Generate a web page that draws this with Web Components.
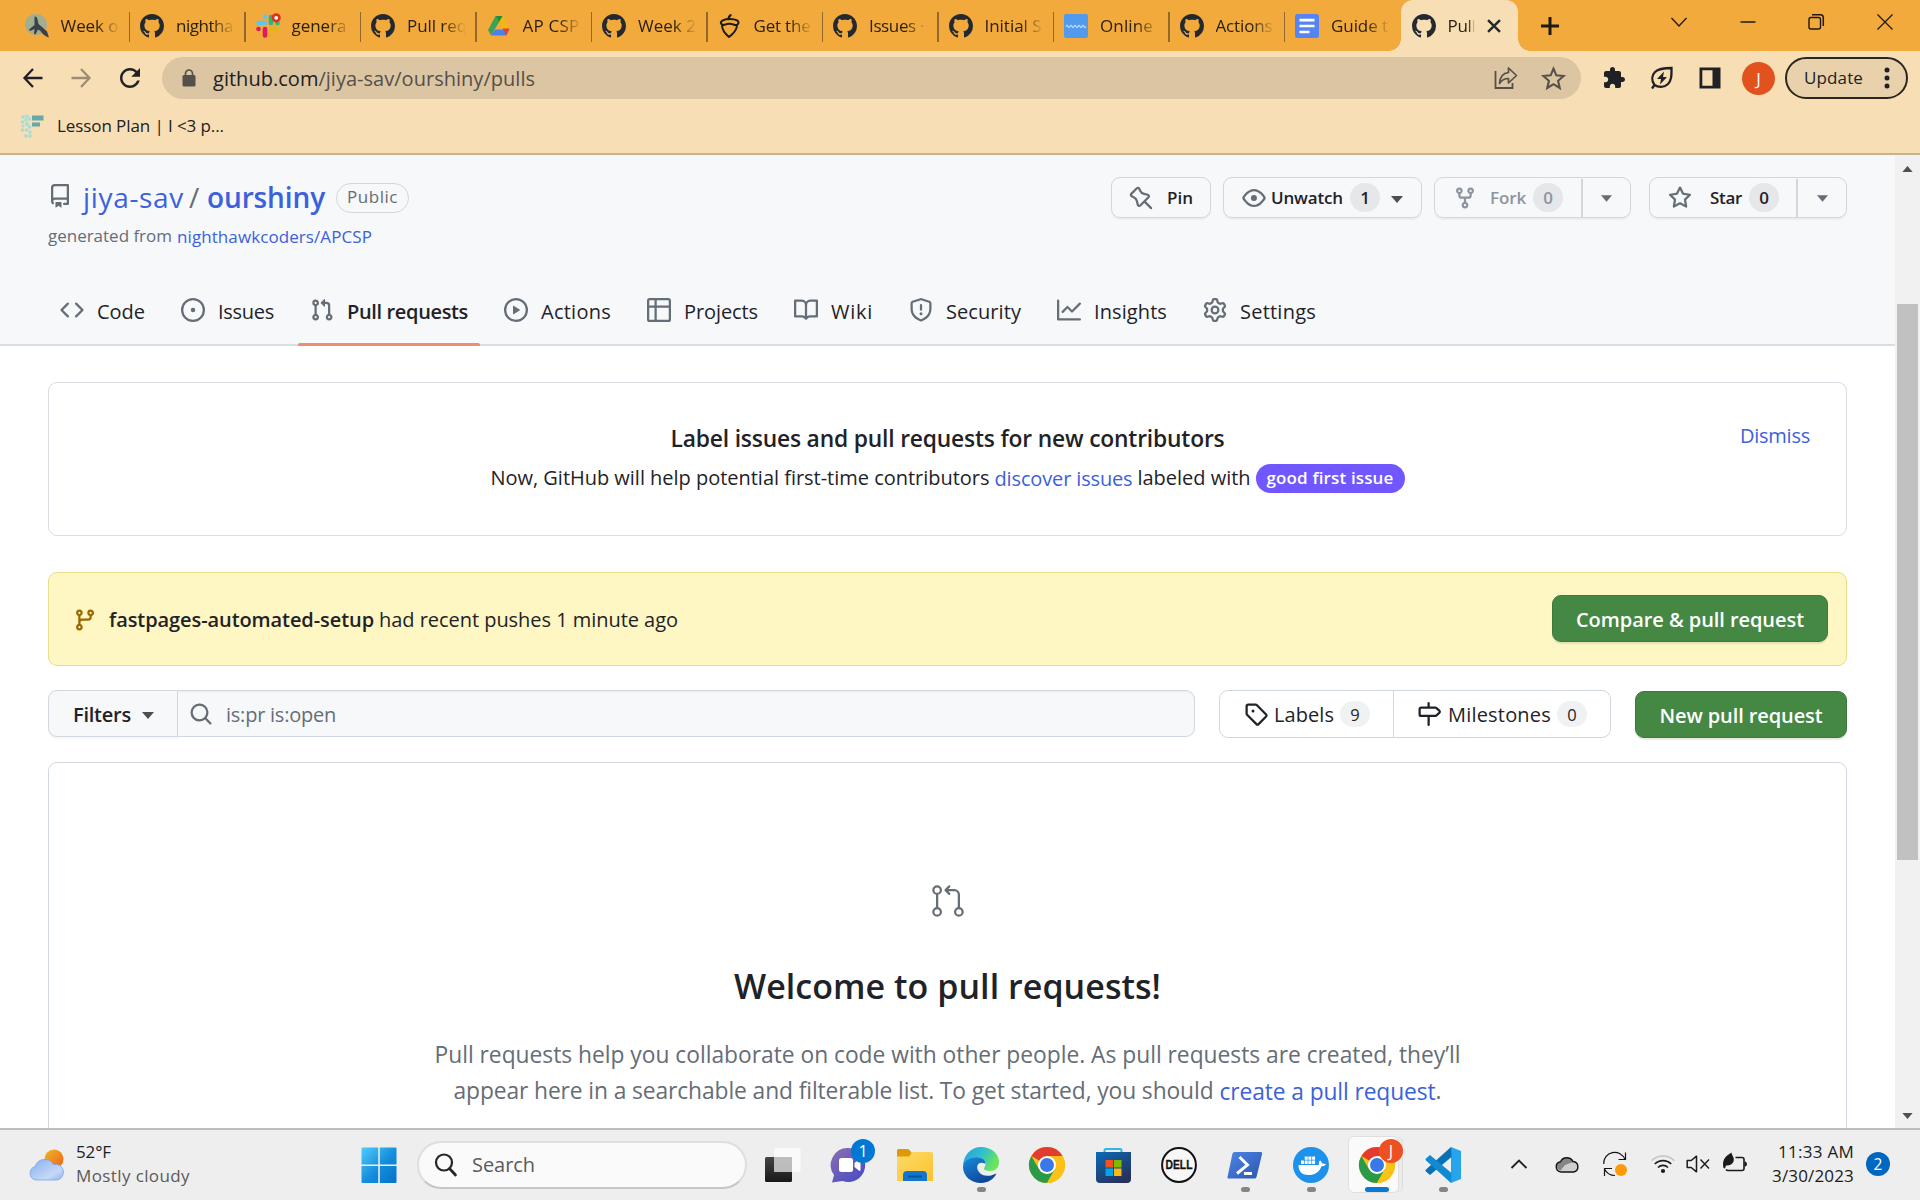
<!DOCTYPE html>
<html lang="en">
<head>
<meta charset="utf-8">
<title>Pull requests · jiya-sav/ourshiny</title>
<style>
html,body{margin:0;height:100%}
body{width:1920px;height:1200px;overflow:hidden;background:#fff;font-family:"Open Sans","Noto Sans",sans-serif;color:#1f2328}
</style>
</head>
<body>
<desktop-screen></desktop-screen>
<script>
const BASE = `<style>*{box-sizing:border-box}.row{display:flex;align-items:center}a{color:#3c61dc;text-decoration:none}</style>`;
function define(name, html, setup) {
  const t = document.createElement('template');
  t.innerHTML = BASE + html;
  customElements.define(name, class extends HTMLElement {
    connectedCallback() {
      if (this.shadowRoot) return;
      this.attachShadow({mode: 'open'}).appendChild(document.importNode(t.content, true));
      if (setup) setup.call(this, this.shadowRoot);
    }
  });
}
const o = d => ({b: '0 0 16 16', m: `<path fill="currentColor" fill-rule="evenodd" d="${d}"/>`});
const m24 = d => ({b: '0 0 24 24', m: `<path fill="currentColor" d="${d}"/>`});
const raw = (b, m) => ({b, m});
const CHROME = `<circle cx="18" cy="18" r="18" fill="#fbc116"/><path d="M18 18 2.4 9A18 18 0 0 1 33.6 9Z" fill="#e33b2e"/><path d="M2.4 9A18 18 0 0 0 18 36l7.8-13.5L10.2 22.5Z" fill="#2b9a48"/><path d="M18 9h15.6A18 18 0 0 1 18 36l7.8-13.5Z" fill="#fbc116"/><circle cx="18" cy="18" r="9" fill="#fff"/><circle cx="18" cy="18" r="7" fill="#3b78e7"/>`;
const ICONS = {
  repo: o('M2 2.5A2.5 2.5 0 0 1 4.5 0h8.75a.75.75 0 0 1 .75.75v12.5a.75.75 0 0 1-.75.75h-2.5a.75.75 0 0 1 0-1.5h1.75v-2h-8a1 1 0 0 0-.714 1.7.75.75 0 1 1-1.072 1.05A2.495 2.495 0 0 1 2 11.5Zm10.5-1h-8a1 1 0 0 0-1 1v6.708A2.486 2.486 0 0 1 4.5 9h8ZM5 12.25a.25.25 0 0 1 .25-.25h3.5a.25.25 0 0 1 .25.25v3.25a.25.25 0 0 1-.4.2l-1.45-1.087a.249.249 0 0 0-.3 0L5.4 15.7a.25.25 0 0 1-.4-.2Z'),
  code: o('m11.28 3.22 4.25 4.25a.75.75 0 0 1 0 1.06l-4.25 4.25a.749.749 0 0 1-1.275-.326.749.749 0 0 1 .215-.734L13.94 8l-3.72-3.72a.749.749 0 0 1 .326-1.275.749.749 0 0 1 .734.215Zm-6.56 0a.751.751 0 0 1 1.042.018.751.751 0 0 1 .018 1.042L2.06 8l3.72 3.72a.749.749 0 0 1-.326 1.275.749.749 0 0 1-.734-.215L.47 8.53a.75.75 0 0 1 0-1.06Z'),
  issue: o('M8 9.5a1.5 1.5 0 1 0 0-3 1.5 1.5 0 0 0 0 3ZM8 0a8 8 0 1 1 0 16A8 8 0 0 1 8 0ZM1.5 8a6.5 6.5 0 1 0 13 0 6.5 6.5 0 0 0-13 0Z'),
  pr: o('M1.5 3.25a2.25 2.25 0 1 1 3 2.122v5.256a2.251 2.251 0 1 1-1.5 0V5.372A2.25 2.25 0 0 1 1.5 3.25Zm5.677-.177L9.573.677A.25.25 0 0 1 10 .854V2.5h1A2.5 2.5 0 0 1 13.5 5v5.628a2.251 2.251 0 1 1-1.5 0V5a1 1 0 0 0-1-1h-1v1.646a.25.25 0 0 1-.427.177L7.177 3.427a.25.25 0 0 1 0-.354ZM3.75 2.5a.75.75 0 1 0 0 1.5.75.75 0 0 0 0-1.5Zm0 9.5a.75.75 0 1 0 0 1.5.75.75 0 0 0 0-1.5Zm8.25.75a.75.75 0 1 0 1.5 0 .75.75 0 0 0-1.5 0Z'),
  prbig: raw('0 0 24 24', '<path fill="currentColor" fill-rule="evenodd" d="M16 19.25a3.25 3.25 0 1 1 6.5 0 3.25 3.25 0 0 1-6.5 0Zm-14.5 0a3.25 3.25 0 1 1 6.5 0 3.25 3.25 0 0 1-6.5 0Zm0-14.5a3.25 3.25 0 1 1 6.5 0 3.25 3.25 0 0 1-6.5 0ZM4.75 3a1.75 1.75 0 1 0 .001 3.501A1.75 1.75 0 0 0 4.75 3Zm0 14.5a1.75 1.75 0 1 0 .001 3.501A1.75 1.75 0 0 0 4.75 17.5Zm14.5 0a1.75 1.75 0 1 0 .001 3.501 1.75 1.75 0 0 0-.001-3.501Z"/><path fill="currentColor" d="M13.405 1.72a.75.75 0 0 1 0 1.06L12.185 4h4.065A3.75 3.75 0 0 1 20 7.75v8.75a.75.75 0 0 1-1.5 0V7.75a2.25 2.25 0 0 0-2.25-2.25h-4.064l1.22 1.22a.75.75 0 0 1-1.061 1.06l-2.5-2.5a.75.75 0 0 1 0-1.06l2.5-2.5a.75.75 0 0 1 1.06 0ZM4.75 7.25A.75.75 0 0 1 5.5 8v8A.75.75 0 0 1 4 16V8a.75.75 0 0 1 .75-.75Z"/>'),
  play: o('M8 0a8 8 0 1 1 0 16A8 8 0 0 1 8 0ZM1.5 8a6.5 6.5 0 1 0 13 0 6.5 6.5 0 0 0-13 0Zm4.879-2.773 4.264 2.559a.25.25 0 0 1 0 .428l-4.264 2.559A.25.25 0 0 1 6 10.559V5.442a.25.25 0 0 1 .379-.215Z'),
  table: o('M0 1.75C0 .784.784 0 1.75 0h12.5C15.216 0 16 .784 16 1.75v12.5A1.75 1.75 0 0 1 14.25 16H1.75A1.75 1.75 0 0 1 0 14.25ZM6.5 6.5v8h7.75a.25.25 0 0 0 .25-.25V6.5Zm8-1.5V1.75a.25.25 0 0 0-.25-.25H6.5V5Zm-13 1.5v7.75c0 .138.112.25.25.25H5v-8ZM5 5V1.5H1.75a.25.25 0 0 0-.25.25V5Z'),
  book: o('M0 1.75A.75.75 0 0 1 .75 1h4.253c1.227 0 2.317.59 3 1.501A3.743 3.743 0 0 1 11.006 1h4.245a.75.75 0 0 1 .75.75v10.5a.75.75 0 0 1-.75.75h-4.507a2.25 2.25 0 0 0-1.591.659l-.622.621a.75.75 0 0 1-1.06 0l-.622-.621A2.25 2.25 0 0 0 5.258 13H.75a.75.75 0 0 1-.75-.75Zm7.251 10.324.004-5.073-.002-2.253A2.25 2.25 0 0 0 5.003 2.5H1.5v9h3.757a3.75 3.75 0 0 1 1.994.574ZM8.755 4.75l-.004 7.322a3.752 3.752 0 0 1 1.992-.572H14.5v-9h-3.495a2.25 2.25 0 0 0-2.25 2.25Z'),
  shield: o('M7.467.133a1.748 1.748 0 0 1 1.066 0l5.25 1.68A1.75 1.75 0 0 1 15 3.48V7c0 1.566-.32 3.182-1.303 4.682-.983 1.498-2.585 2.813-5.032 3.855a1.697 1.697 0 0 1-1.33 0c-2.447-1.042-4.049-2.357-5.032-3.855C1.32 10.182 1 8.566 1 7V3.48a1.755 1.755 0 0 1 1.217-1.667Zm.61 1.429a.25.25 0 0 0-.153 0l-5.25 1.68a.25.25 0 0 0-.174.238V7c0 1.358.275 2.666 1.057 3.86.784 1.194 2.121 2.34 4.366 3.297a.196.196 0 0 0 .154 0c2.245-.956 3.582-2.104 4.366-3.298C13.225 9.666 13.5 8.36 13.5 7V3.48a.251.251 0 0 0-.174-.237l-5.25-1.68ZM8.75 4.75v3a.75.75 0 0 1-1.5 0v-3a.75.75 0 0 1 1.5 0ZM9 10.5a1 1 0 1 1-2 0 1 1 0 0 1 2 0Z'),
  graph: o('M1.5 1.75V13.5h13.75a.75.75 0 0 1 0 1.5H.75a.75.75 0 0 1-.75-.75V1.75a.75.75 0 0 1 1.5 0Zm14.28 2.53-5.25 5.25a.75.75 0 0 1-1.06 0L7 7.06 4.28 9.78a.751.751 0 0 1-1.042-.018.751.751 0 0 1-.018-1.042l3.25-3.25a.75.75 0 0 1 1.06 0L10 7.94l4.72-4.72a.751.751 0 0 1 1.042.018.751.751 0 0 1 .018 1.042Z'),
  gear: o('M8 0a8.2 8.2 0 0 1 .701.031C9.444.095 9.99.645 10.16 1.29l.288 1.107c.018.066.079.158.212.224.231.114.454.243.668.386.123.082.233.09.299.071l1.103-.303c.644-.176 1.392.021 1.82.63.27.385.506.792.704 1.218.315.675.111 1.422-.364 1.891l-.814.806c-.049.048-.098.147-.088.294.016.257.016.515 0 .772-.01.147.038.246.088.294l.814.806c.475.469.679 1.216.364 1.891a7.977 7.977 0 0 1-.704 1.217c-.428.61-1.176.807-1.82.63l-1.102-.302c-.067-.019-.177-.011-.3.071a5.909 5.909 0 0 1-.668.386c-.133.066-.194.158-.211.224l-.29 1.106c-.168.646-.715 1.196-1.458 1.26a8.006 8.006 0 0 1-1.402 0c-.743-.064-1.289-.614-1.458-1.26l-.289-1.106c-.018-.066-.079-.158-.212-.224a5.738 5.738 0 0 1-.668-.386c-.123-.082-.233-.09-.299-.071l-1.103.303c-.644.176-1.392-.021-1.82-.63a8.12 8.12 0 0 1-.704-1.218c-.315-.675-.111-1.422.363-1.891l.815-.806c.05-.048.098-.147.088-.294a6.214 6.214 0 0 1 0-.772c.01-.147-.038-.246-.088-.294l-.815-.806C.635 6.045.431 5.298.746 4.623a7.92 7.92 0 0 1 .704-1.217c.428-.61 1.176-.807 1.82-.63l1.102.302c.067.019.177.011.3-.071.214-.143.437-.272.668-.386.133-.066.194-.158.211-.224l.29-1.106C6.009.645 6.556.095 7.299.03 7.53.01 7.764 0 8 0Zm-.571 1.525c-.036.003-.108.036-.137.146l-.289 1.105c-.147.561-.549.967-.998 1.189-.173.086-.34.183-.5.29-.417.278-.97.423-1.529.27l-1.103-.303c-.109-.03-.175.016-.195.045-.22.312-.412.644-.573.99-.014.031-.021.11.059.19l.815.806c.411.406.562.957.53 1.456a4.709 4.709 0 0 0 0 .582c.032.499-.119 1.05-.53 1.456l-.815.806c-.081.08-.073.159-.059.19.162.346.353.677.573.989.02.03.085.076.195.046l1.102-.303c.56-.153 1.113-.008 1.53.27.161.107.328.204.501.29.447.222.85.629.997 1.189l.289 1.105c.029.109.101.143.137.146a6.6 6.6 0 0 0 1.142 0c.036-.003.108-.036.137-.146l.289-1.105c.147-.561.549-.967.998-1.189.173-.086.34-.183.5-.29.417-.278.97-.423 1.529-.27l1.103.303c.109.029.175-.016.195-.045.22-.313.411-.644.573-.99.014-.031.021-.11-.059-.19l-.815-.806c-.411-.406-.562-.957-.53-1.456a4.709 4.709 0 0 0 0-.582c-.032-.499.119-1.05.53-1.456l.815-.806c.081-.08.073-.159.059-.19a6.464 6.464 0 0 0-.573-.989c-.02-.03-.085-.076-.195-.046l-1.102.303c-.56.153-1.113.008-1.53-.27a4.44 4.44 0 0 0-.501-.29c-.447-.222-.85-.629-.997-1.189l-.289-1.105c-.029-.11-.101-.143-.137-.146a6.6 6.6 0 0 0-1.142 0ZM11 8a3 3 0 1 1-6 0 3 3 0 0 1 6 0ZM9.5 8a1.5 1.5 0 1 0-3.001.001A1.5 1.5 0 0 0 9.5 8Z'),
  eye: o('M8 2c1.981 0 3.671.992 4.933 2.078 1.27 1.091 2.187 2.345 2.637 3.023a1.62 1.62 0 0 1 0 1.798c-.45.678-1.367 1.932-2.637 3.023C11.67 13.008 9.981 14 8 14c-1.981 0-3.671-.992-4.933-2.078C1.797 10.83.88 9.576.43 8.898a1.62 1.62 0 0 1 0-1.798c.45-.677 1.367-1.931 2.637-3.022C4.33 2.992 6.019 2 8 2ZM1.679 7.932a.12.12 0 0 0 0 .136c.411.622 1.241 1.75 2.366 2.717C5.176 11.758 6.527 12.5 8 12.5c1.473 0 2.825-.742 3.955-1.715 1.124-.967 1.954-2.096 2.366-2.717a.12.12 0 0 0 0-.136c-.412-.621-1.242-1.75-2.366-2.717C10.824 4.242 9.473 3.5 8 3.5c-1.473 0-2.825.742-3.955 1.715-1.124.967-1.954 2.096-2.366 2.717ZM8 10a2 2 0 1 1-.001-3.999A2 2 0 0 1 8 10Z'),
  fork: o('M5 5.372v.878c0 .414.336.75.75.75h4.5a.75.75 0 0 0 .75-.75v-.878a2.25 2.25 0 1 1 1.5 0v.878a2.25 2.25 0 0 1-2.25 2.25h-1.5v2.128a2.251 2.251 0 1 1-1.5 0V8.5h-1.5A2.25 2.25 0 0 1 3.5 6.25v-.878a2.25 2.25 0 1 1 1.5 0ZM5 3.25a.75.75 0 1 0-1.5 0 .75.75 0 0 0 1.5 0Zm6.75.75a.75.75 0 1 0 0-1.5.75.75 0 0 0 0 1.5Zm-3 8.75a.75.75 0 1 0-1.5 0 .75.75 0 0 0 1.5 0Z'),
  star: o('M8 .25a.75.75 0 0 1 .673.418l1.882 3.815 4.21.612a.75.75 0 0 1 .416 1.279l-3.046 2.97.719 4.192a.751.751 0 0 1-1.088.791L8 12.347l-3.766 1.98a.75.75 0 0 1-1.088-.79l.72-4.194L.818 6.374a.75.75 0 0 1 .416-1.28l4.21-.611L7.327.668A.75.75 0 0 1 8 .25Zm0 2.445L6.615 5.5a.75.75 0 0 1-.564.41l-3.097.45 2.24 2.184a.75.75 0 0 1 .216.664l-.528 3.084 2.769-1.456a.75.75 0 0 1 .698 0l2.77 1.456-.53-3.084a.75.75 0 0 1 .216-.664l2.24-2.183-3.096-.45a.75.75 0 0 1-.564-.41L8 2.694Z'),
  branch: o('M9.5 3.25a2.25 2.25 0 1 1 3 2.122V6A2.5 2.5 0 0 1 10 8.5H6a1 1 0 0 0-1 1v1.128a2.251 2.251 0 1 1-1.5 0V5.372a2.25 2.25 0 1 1 1.5 0v1.836A2.493 2.493 0 0 1 6 7h4a1 1 0 0 0 1-1v-.628A2.25 2.25 0 0 1 9.5 3.25Zm-6 0a.75.75 0 1 0 1.5 0 .75.75 0 0 0-1.5 0Zm8.25-.75a.75.75 0 1 0 0 1.5.75.75 0 0 0 0-1.5ZM4.25 12a.75.75 0 1 0 0 1.5.75.75 0 0 0 0-1.5Z'),
  search: o('M10.68 11.74a6 6 0 0 1-7.922-8.982 6 6 0 0 1 8.982 7.922l3.04 3.04a.749.749 0 0 1-.326 1.275.749.749 0 0 1-.734-.215ZM11.5 7a4.499 4.499 0 1 0-8.997 0A4.499 4.499 0 0 0 11.5 7Z'),
  tag: o('M1 7.775V2.75C1 1.784 1.784 1 2.75 1h5.025c.464 0 .91.184 1.238.513l6.25 6.25a1.75 1.75 0 0 1 0 2.474l-5.026 5.026a1.75 1.75 0 0 1-2.474 0l-6.25-6.25A1.752 1.752 0 0 1 1 7.775Zm1.5 0c0 .066.026.13.073.177l6.25 6.25a.25.25 0 0 0 .354 0l5.025-5.025a.25.25 0 0 0 0-.354l-6.25-6.25a.25.25 0 0 0-.177-.073H2.75a.25.25 0 0 0-.25.25ZM6 5a1 1 0 1 1 0 2 1 1 0 0 1 0-2Z'),
  milestone: o('M7.75 0a.75.75 0 0 1 .75.75V3h3.634c.414 0 .814.147 1.13.414l2.07 1.75a1.75 1.75 0 0 1 0 2.672l-2.07 1.75a1.75 1.75 0 0 1-1.13.414H8.5v5.25a.75.75 0 0 1-1.5 0V10H2.75A1.75 1.75 0 0 1 1 8.25v-3.5C1 3.784 1.784 3 2.75 3H7V.75A.75.75 0 0 1 7.75 0Zm4.384 8.5a.25.25 0 0 0 .161-.06l2.07-1.75a.248.248 0 0 0 0-.38l-2.07-1.75a.25.25 0 0 0-.161-.06H2.75a.25.25 0 0 0-.25.25v3.5c0 .138.112.25.25.25h9.384Z'),
  pin: raw('0 0 16 16', '<path transform="matrix(-1 0 0 1 16 0)" fill="none" stroke="currentColor" stroke-width="1.5" stroke-linejoin="round" stroke-linecap="round" d="M10.76 1.52 14.48 5.24A1 1 0 0 1 14.2 6.85L12.87 7.46A3.84 3.84 0 0 0 10.75 10.05L10.16 12.51A1 1 0 0 1 8.48 12.98L3.02 7.52A1 1 0 0 1 3.49 5.84L5.95 5.25A3.84 3.84 0 0 0 8.54 3.13L9.15 1.8A1 1 0 0 1 10.76 1.52ZM5.75 10.25 1.25 14.75"/>'),
  github: o('M8 0c4.42 0 8 3.58 8 8a8.013 8.013 0 0 1-5.45 7.59c-.4.08-.55-.17-.55-.38 0-.27.01-1.13.01-2.2 0-.75-.25-1.23-.54-1.48 1.78-.2 3.65-.88 3.65-3.95 0-.88-.31-1.59-.82-2.15.08-.2.36-1.02-.08-2.12 0 0-.67-.22-2.2.82-.64-.18-1.32-.27-2-.27-.68 0-1.36.09-2 .27-1.53-1.03-2.2-.82-2.2-.82-.44 1.1-.16 1.92-.08 2.12-.51.56-.82 1.28-.82 2.15 0 3.06 1.86 3.75 3.64 3.95-.23.2-.44.55-.51 1.07-.46.21-1.61.55-2.33-.66-.15-.24-.6-.83-1.23-.82-.67.01-.27.38.01.53.34.19.73.9.82 1.13.16.45.68 1.31 2.69.94 0 .67.01 1.3.01 1.49 0 .21-.15.45-.55.38A7.995 7.995 0 0 1 0 8c0-4.42 3.58-8 8-8Z'),
  hawk: raw('0 0 24 24', '<ellipse cx="11" cy="10.5" rx="11" ry="10.5" fill="#a3ae90"/><path d="M9.5 2.5c2 0 2.8 1.3 3 3l1 4.5 3 2.5 5.5 5 2 6c-4-1-6.5-3.5-8.5-6.5l-2.5-1.5-2.5 5-1.5-.5.5-5-4.5 2-1-1.5 5.5-4.5Z" fill="#3b414b"/>'),
  slack: raw('0 0 24 24', '<g stroke-width="4.6" stroke-linecap="round" fill="none"><path d="M2.5 9h6.500M9 2.6v.01" stroke="#5cc6f0"/><path d="M15 3v6M21.500 9v.01" stroke="#2eb67d"/><path d="M21 15h-6M15 21.500v.01" stroke="#e3b41e"/><path d="M9 21.500V15M2.500 15v.01" stroke="#dd1c5a"/></g><circle cx="20.200" cy="3.800" r="4.600" fill="#e0311d"/><circle cx="20.200" cy="3.800" r="1.900" fill="#fff"/>'),
  drive: raw('0 0 24 24', '<path d="M8.500 2h7l7 12.500h-7Z" fill="#f1b90d"/><path d="m8.500 2 3.500 6.200L4 21.500 1 16Z" fill="#3da352"/><path d="M8.500 2h7L12 8.200Z" fill="#248a3c"/><path d="M8 15.500h14L19 21.500H4Z" fill="#4c80ee"/><path d="M15.500 14.500h7l-3 7Z" fill="#dc4436"/>'),
  acorn: raw('0 0 24 24', '<g fill="none" stroke="#1d1c14" stroke-linecap="round" stroke-linejoin="round"><path stroke-width="2" d="M3 9.500C2 7 6 5 12 5s10 2 8 5-4-1-11 0C6 11 4.500 12 3 9.500ZM4 11c0 6 4 9.500 7 12 4-3 8-7 8-12"/><path stroke-width="2.500" d="M10.500 5c0-2 .7-3 2-3.800"/></g>'),
  scroll: raw('0 0 24 24', '<rect width="24" height="24" rx="2" fill="#519aee"/><path d="M2 12.500q1-2 2 0t2 0 2 0 2 0 2 0 2 0 2 0 2 0 2 0 2 0" stroke="#b8d8fb" stroke-width="1.300" fill="none"/>'),
  docs: raw('0 0 24 24', '<rect width="24" height="24" rx="2.500" fill="#5684f4"/><path d="M4.500 6.200h15M4.500 12h15M4.500 18h10" stroke="#fff" stroke-width="2.700"/>'),
  x: raw('0 0 24 24', '<path d="m5.500 5.500 13 13M18.500 5.500l-13 13" stroke="currentColor" stroke-width="2.700"/>'),
  plus: raw('0 0 24 24', '<path d="M12 3v18M3 12h18" stroke="currentColor" stroke-width="3"/>'),
  down: raw('0 0 24 24', '<path d="m4.500 8 7.500 8 7.500-8" fill="none" stroke="currentColor" stroke-width="1.300"/>'),
  min: raw('0 0 24 24', '<path d="M4.500 12h15" stroke="currentColor" stroke-width="1.500"/>'),
  restore: raw('0 0 24 24', '<rect x="5" y="7.500" width="11.500" height="11.500" rx="2" fill="none" stroke="currentColor" stroke-width="1.400"/><path d="M8 4.700h8.500a2.800 2.800 0 0 1 2.800 2.800V16" fill="none" stroke="currentColor" stroke-width="1.500"/>'),
  close: raw('0 0 24 24', '<path d="m4.500 4.500 15 15M19.500 4.500l-15 15" stroke="currentColor" stroke-width="1.300"/>'),
  back: raw('0 0 24 24', '<path d="M21.500 12H4M12 3 3.500 12l8.500 9" fill="none" stroke="currentColor" stroke-width="2.300"/>'),
  fwd: raw('0 0 24 24', '<path d="M2.500 12H20M12 3l8.500 9-8.500 9" fill="none" stroke="currentColor" stroke-width="2.300"/>'),
  reload: m24('M17.65 6.35C16.2 4.9 14.21 4 12 4c-4.42 0-7.99 3.58-7.99 8s3.57 8 7.99 8c3.73 0 6.84-2.55 7.73-6h-2.08c-.82 2.33-3.04 4-5.65 4-3.31 0-6-2.69-6-6s2.69-6 6-6c1.66 0 3.14.69 4.22 1.78L13 11h7V4l-2.35 2.35z'),
  lock: raw('0 0 14 18', '<rect x=".5" y="6" width="13" height="11.500" rx="1.500" fill="currentColor"/><path d="M3.500 7V4.500a3.500 3.500 0 0 1 7 0V7" fill="none" stroke="currentColor" stroke-width="1.700"/>'),
  share: raw('0 0 24 24', '<path d="M1.500 5v17h17v-5" fill="none" stroke="currentColor" stroke-width="1.800"/><path d="M14.500 2v4.500C9 7 6 11 5.500 17.500c2.500-4 5-5 9-5V17l8-7.500Z" fill="none" stroke="currentColor" stroke-width="1.700" stroke-linejoin="round"/>'),
  bstar: raw('0 0 24 24', '<path d="m12 2.500 2.700 6.500 7.000.6-5.300 4.600 1.600 6.900L12 17.400 6 21.100l1.600-6.900L2.300 9.600 9.300 9Z" fill="none" stroke="currentColor" stroke-width="2"/>'),
  puzzle: m24('M20.5 11H19V7c0-1.100-.9-2-2-2h-4V3.500C13 2.120 11.880 1 10.500 1S8 2.120 8 3.500V5H4c-1.100 0-1.990.9-1.990 2v3.800H3.500c1.490 0 2.700 1.210 2.700 2.700s-1.210 2.700-2.700 2.700H2V20c0 1.100.9 2 2 2h3.800v-1.500c0-1.490 1.210-2.700 2.700-2.700 1.490 0 2.700 1.210 2.700 2.700V22H17c1.100 0 2-.9 2-2v-4h1.500c1.380 0 2.500-1.120 2.500-2.500S21.880 11 20.500 11z'),
  leaf: raw('0 0 24 24', '<path d="M2 22.500 4.500 19M4.500 19C1 14 2 9 5 6c3.500-3.500 9-4 16.500-4 0 7 .3 12-3.500 16-4 4-10 3.500-13.500 1Z" fill="none" stroke="currentColor" stroke-width="2.300"/><path d="m14 5.500-7 7.500h4l-1 5.500 7-7.500h-4Z" fill="currentColor"/>'),
  panel: raw('0 0 24 24', '<path d="M1.500 1.500h21v21h-21ZM4.300 4.300v15.400h10.200V4.300Z" fill-rule="evenodd" fill="currentColor"/>'),
  dots: raw('0 0 24 24', '<g fill="currentColor"><circle cx="12" cy="4" r="2.500"/><circle cx="12" cy="12" r="2.500"/><circle cx="12" cy="20" r="2.500"/></g>'),
  lesson: raw('0 0 24 24', '<path d="M12 1.500h11.500v5H12ZM12 8.500h8v4h-8Z" fill="#66a9a8"/><g fill="#a5dcd8"><circle cx="3" cy="3" r="1.800"/><circle cx="7" cy="2.200" r="1.800"/><circle cx="9.500" cy="5" r="1.800"/><circle cx="6" cy="6" r="1.800"/><circle cx="2.500" cy="8" r="1.800"/><circle cx="7" cy="10" r="2"/><circle cx="3" cy="12" r="1.600"/><circle cx="9.500" cy="13" r="1.800"/><circle cx="2.500" cy="16" r="1.800"/><circle cx="6.500" cy="16" r="1.800"/><circle cx="10" cy="18" r="1.800"/><circle cx="6" cy="22" r="1.800"/><circle cx="10" cy="22" r="1.800"/></g>'),
  caret: raw('0 0 12 7', '<path d="M0 0h12L6 7Z" fill="currentColor"/>'),
  weather: raw('0 0 36 32', '<defs><linearGradient id="s" x2="1" y2="1"><stop stop-color="#f0b72f"/><stop offset="1" stop-color="#ee6110"/></linearGradient><linearGradient id="c" x2="1" y2="1"><stop stop-color="#87aef0"/><stop offset=".7" stop-color="#c5d9f6"/><stop offset="1" stop-color="#92b3ee"/></linearGradient></defs><circle cx="25.500" cy="10" r="9.500" fill="url(#s)"/><path d="M7 31a7 7 0 0 1-.5-13.500A10.200 10.200 0 0 1 25 15.500a8 8 0 0 1 4 15.500Z" fill="url(#c)" stroke="#7fa3e8" stroke-width=".8"/>'),
  windows: raw('0 0 36 36', '<defs><linearGradient id="w" x2="1" y2="1"><stop stop-color="#4ecdfb"/><stop offset=".55" stop-color="#138cdb"/><stop offset="1" stop-color="#0572c8"/></linearGradient></defs><path d="M.5 1.500Q.5.500 1.500.500H17.200v17H.5ZM18.800.500H34.500q1 0 1 1v16H18.800ZM.5 19h16.700v17H1.500q-1 0-1-1ZM18.800 19h16.700v16q0 1-1 1H18.800Z" fill="url(#w)"/>'),
  wsearch: raw('0 0 24 24', '<circle cx="10" cy="9.500" r="8" fill="none" stroke="#24242a" stroke-width="2.200"/><path d="m15.500 15.500 6 6.500" stroke="#24242a" stroke-width="2.700" stroke-linecap="round"/>'),
  taskview: raw('0 0 36 36', '<defs><linearGradient id="d" x2="0" y2="1"><stop stop-color="#454545"/><stop offset="1" stop-color="#181818"/></linearGradient></defs><rect y="10" width="27" height="25" rx="1.500" fill="url(#d)"/><rect x="9" y="1" width="26.500" height="24" rx="1.500" fill="#fff" fill-opacity=".72"/><path d="M9 10h18v15H9Z" fill="#b8b8b8" fill-opacity=".7"/>'),
  chat: raw('0 0 36 36', '<defs><linearGradient id="p" x2=".8" y2="1"><stop stop-color="#8d6fb0"/><stop offset="1" stop-color="#4a4cc4"/></linearGradient></defs><path d="M17.500 1a17 17 0 1 1-6 33L1 35.500 3 28A17 17 0 0 1 17.500 1Z" fill="url(#p)"/><rect x="8" y="11" width="14" height="14" rx="2.500" fill="#fff"/><path d="m23.500 16 5-4q1 0 1 1v10q0 1-1 1l-5-4Z" fill="#fff"/>'),
  explorer: raw('0 0 36 36', '<defs><linearGradient id="f" x2="1" y2="1"><stop stop-color="#fddb6b"/><stop offset="1" stop-color="#fcc22c"/></linearGradient></defs><path d="M0 3.500Q0 2 1.500 2h9q1.500 0 2.500 1.500L15.500 7 12 11H0Z" fill="#dd9a08"/><path d="M0 9.500h12L15.500 5H34q2 0 2 2v27H0Z" fill="url(#f)"/><path d="M6 34v-6q0-4 4-4h16q4 0 4 4v6Z" fill="#1276cf"/><path d="M11 29.500h14" stroke="#0b5296" stroke-width="2"/>'),
  edge: raw('0 0 36 36', '<defs><linearGradient id="e" x2="1" y2=".4"><stop stop-color="#2a9fe0"/><stop offset=".55" stop-color="#2fbfce"/><stop offset="1" stop-color="#6be558"/></linearGradient><linearGradient id="g" x2=".6" y2="1"><stop stop-color="#1a8adb"/><stop offset="1" stop-color="#0c4597"/></linearGradient></defs><path d="M18 0c10 0 18 6.500 18 15 0 6-4 9-9 9-4 0-6-1.200-6-2.500 0-1 1.500-1.500 1.500-4.500 0-3-3.500-6-8.500-6C6 11 1 15 0 20 0 8 8 0 18 0Z" fill="url(#e)"/><path d="M0 20C.5 14 6 10.500 13 10.500c5 0 9.500 2 9.500 6-8-3-9.500 3-7.500 7 2.500 5 9 6 13 5 3-.8 4.500-2 5.500-2C31 32 25 36 18 36 8 36 0 29 0 20Z" fill="url(#g)"/>'),
  chrome: raw('0 0 36 36', CHROME),
  store: raw('0 0 36 36', '<defs><linearGradient id="h" x2=".6" y2="1"><stop stop-color="#0b6bb6"/><stop offset="1" stop-color="#26325c"/></linearGradient></defs><path d="M9.500 7V3.500q0-1.500 1.500-1.500h14q1.500 0 1.500 1.500V7" fill="none" stroke="#30b5e4" stroke-width="2"/><path d="M1 5h35v27q0 4-4 4H5q-4 0-4-4Z" fill="url(#h)"/><path fill="#f1511b" d="M10.500 13h7.500v7.500h-7.500Z"/><path fill="#80b900" d="M19 13h7.500v7.500H19Z"/><path fill="#00a4ef" d="M10.500 21.500h7.500V29h-7.500Z"/><path fill="#fbb910" d="M19 21.500h7.500V29H19Z"/>'),
  dell: raw('0 0 36 36', '<circle cx="18" cy="18" r="16.900" fill="#f7f7f7" stroke="#111" stroke-width="2"/><text x="18" y="22.300" text-anchor="middle" textLength="27" lengthAdjust="spacingAndGlyphs" font-family="Liberation Sans, sans-serif" font-weight="bold" font-size="12.500" fill="#111" stroke="#111" stroke-width=".3">DELL</text>'),
  powershell: raw('0 0 36 36', '<defs><linearGradient id="q" x2="1" y2="1"><stop stop-color="#4d86e8"/><stop offset="1" stop-color="#2c56ad"/></linearGradient></defs><path d="M7.500 5H34q1.500 0 1.200 1.500L29.500 30q-.5 1.500-2 1.500H1.500Q0 31.500.5 30L5.500 6.500Q6 5 7.500 5Z" fill="url(#q)"/><path d="m12.500 10 8 8L10 26.500M17 26.500h8" fill="none" stroke="#fff" stroke-width="2.900"/>'),
  docker: raw('0 0 36 36', '<circle cx="18" cy="18" r="18" fill="#1d91ec"/><path d="M5.500 18h20.500c-.5-2 0-3.500 1-4.500 1.300.7 2 2 2 3 1.500-.3 3 0 4 .7-1 1.500-2.500 2-4.500 2C26.500 25 22 28 15.500 28 9.500 28 5.500 25 5.500 18Z" fill="#fff"/><path d="M8 13.500h3V17H8Zm3.700 0h3V17h-3Zm3.700 0h3V17h-3Zm3.700 0h3V17h-3Zm-7.400-3.900h3v3.200h-3Zm3.700 0h3v3.200h-3Zm3.700 0h3v3.200h-3Z" fill="#fff"/>'),
  vscode: raw('0 0 36 36', '<path d="M26 0 36 4v28l-10 4Z" fill="#26a4ee"/><path d="m26 0 .5 10L5 28l-4-3.500q-1-1 0-2Z" fill="#0871b6"/><path d="m26 36 .5-10L5 8l-4 3.500q-1 1 0 2Z" fill="#128ad2"/>'),
  up: raw('0 0 24 24', '<path d="m4.500 16 7.500-7.500 7.500 7.500" fill="none" stroke="#222" stroke-width="1.900"/>'),
  cloud: raw('0 0 24 24', '<path d="M6 20a5.200 5.200 0 0 1-.5-10.300A7 7 0 0 1 18 9.500 5.300 5.300 0 0 1 18.500 20Z" fill="#cfcfcf"/><path d="M1 15a5 5 0 0 1 4.500-5.300A7 7 0 0 1 18 9.500l1 .2L10 13 5 19Z" fill="#858585"/><path d="M6 20a5.200 5.200 0 0 1-.5-10.300A7 7 0 0 1 18 9.500 5.300 5.300 0 0 1 18.500 20Z" fill="none" stroke="#151515" stroke-width="1.400"/>'),
  sync: raw('0 0 24 24', '<path d="M.7 12A11 11 0 0 1 22 7.500M22.500.500v7h-7M1.500 24v-7.500h7.500M1.500 17C4 22 8 23.500 12 23.500" fill="none" stroke="#151515" stroke-width="1.200"/><circle cx="18" cy="18" r="6" fill="#fb9a0a"/>'),
  wifi: raw('0 0 24 24', '<circle cx="12" cy="19" r="2.100" fill="#1b1b1b"/><g fill="none" stroke="#1b1b1b" stroke-width="1.600"><path d="M7 15.500a7 7 0 0 1 10 0"/><path d="M3.800 12a11.600 11.600 0 0 1 16.400 0"/><path d="M.7 8.700a16 16 0 0 1 22.600 0" stroke="#c3c3c3"/></g>'),
  mute: raw('0 0 24 24', '<path d="M1.200 8.500h4l5.300-4.300v15.600L5.200 15.500h-4Z" fill="none" stroke="#1b1b1b" stroke-width="1.500" stroke-linejoin="round"/><path d="m14.500 7.500 8.500 9M23 7.500l-8.500 9" stroke="#1b1b1b" stroke-width="1.400"/>'),
  battery: raw('0 0 24 24', '<path d="M12.500 5.500H19a2 2 0 0 1 2 2v9a2 2 0 0 1-2 2H5a2.500 2.500 0 0 1-2-1" fill="none" stroke="#1b1b1b" stroke-width="1.600"/><path d="M21.500 9.500h1q1.500 1 1.500 2.500t-1.500 2.500h-1Z" fill="#1b1b1b"/><path d="M.5 16C-1 9 1 5 8.500.500c0 3 3.500 5 2 9-1 3-4.500 4.500-7.500 4l-1 3Z" fill="#1b1b1b"/>'),
};
define('ui-icon', `<style>:host{display:block;flex:none}svg{display:block;width:100%;height:100%;overflow:visible}</style><svg></svg>`, function (r) {
  const i = ICONS[this.getAttribute('name')], s = this.getAttribute('size') || 24;
  const svg = r.querySelector('svg');
  svg.setAttribute('viewBox', i.b); svg.innerHTML = i.m;
  this.style.width = s + 'px'; this.style.height = (this.getAttribute('h') || s) + 'px';
});
/* One line of text set to a given measure by adjusting its tracking. */
define('fit-text', `<style>:host{display:inline-block;flex:none;white-space:nowrap;line-height:1.2}</style><span><slot></slot></span>`, function (r) {
  const w = +this.getAttribute('w'), s = this.getAttribute('s');
  if (s) this.style.fontSize = s + 'px';
  const n = this.textContent.length, nat = r.querySelector('span').getBoundingClientRect().width;
  this.style.letterSpacing = ((w - nat) / n).toFixed(3) + 'px';
  this.style.width = w + 'px';
});

define('browser-tab', `<style>
:host{display:block;width:115.500px;height:51px;position:relative;flex:none}
:host(:not([active]):not([last]))::after{content:"";position:absolute;right:0;top:12px;width:1.500px;height:30px;background:#93692b}
.in{display:flex;align-items:center;height:51px;padding-left:10px}
.t{margin-left:12px;width:59px;overflow:hidden;line-height:24px;font-size:17px;color:#2b2112;-webkit-mask-image:linear-gradient(90deg,#000 60%,transparent);mask-image:linear-gradient(90deg,#000 60%,transparent)}
ui-icon{color:#24292f}.x{display:none}
:host([active]){width:117px;background:#f8deb4;border-radius:12px 12px 0 0}
:host([active])::before,:host([active])::after{content:"";position:absolute;bottom:0;width:12px;height:12px}
:host([active])::before{left:-12px;background:radial-gradient(circle at 0 0,transparent 11.500px,#f8deb4 12px)}
:host([active])::after{right:-12px;background:radial-gradient(circle at 100% 0,transparent 11.500px,#f8deb4 12px)}
:host([active]) .in{padding-left:11px}
:host([active]) .t{width:27px;-webkit-mask-image:linear-gradient(90deg,#000 75%,transparent);mask-image:linear-gradient(90deg,#000 75%,transparent)}
:host([active]) .x{display:block;margin-left:8px}
</style><div class="in"></div>`, function (r) {
  r.querySelector('.in').innerHTML = `<ui-icon name="${this.getAttribute('icon')}"></ui-icon><div class="t"><fit-text w="${this.getAttribute('w') || 57}">${this.getAttribute('label')}</fit-text></div><ui-icon class="x" name="x" size="22"></ui-icon>`;
});
define('browser-tabs', `<style>:host{display:flex;align-items:flex-start;height:51px;background:#f2aa3c;padding-left:14.500px;color:#1d1a12}
.n{margin:13.500px 0 0 20px}.w{display:flex;margin:10px 23px 0 auto;gap:44.700px}</style>
<browser-tab icon="hawk" label="Week o" w="58"></browser-tab><browser-tab icon="github" label="nightha"></browser-tab><browser-tab icon="slack" label="genera" w="55"></browser-tab><browser-tab icon="github" label="Pull req" w="60"></browser-tab><browser-tab icon="drive" label="AP CSP"></browser-tab><browser-tab icon="github" label="Week 2" w="58"></browser-tab><browser-tab icon="acorn" label="Get the"></browser-tab><browser-tab icon="github" label="Issues ·" w="55"></browser-tab><browser-tab icon="github" label="Initial S"></browser-tab><browser-tab icon="scroll" label="Online" w="53"></browser-tab><browser-tab icon="github" label="Actions"></browser-tab><browser-tab icon="docs" label="Guide t" last></browser-tab><browser-tab icon="github" label="Pull" w="28" active></browser-tab>
<ui-icon class="n" name="plus"></ui-icon><div class="w"><ui-icon name="down"></ui-icon><ui-icon name="min"></ui-icon><ui-icon name="restore"></ui-icon><ui-icon name="close"></ui-icon></div>`);

define('browser-toolbar', `<style>:host{display:block;height:104px;background:#f8deb4;border-bottom:2px solid #c9b291;color:#202124;box-sizing:border-box}
.nav{height:54px;padding-left:20.500px}.omni{display:flex;align-items:center;height:42px;width:1419px;margin-left:17.500px;border-radius:21px;background:#dcc5a2;padding-left:20px;color:#55504a}
.av{width:33px;height:33px;border-radius:50%;background:#e2521f;color:#fff;display:grid;place-items:center;font-size:17px}
.up{display:flex;align-items:center;width:123px;height:42px;border:2px solid #2a2721;border-radius:21px;background:#e9d1ab;margin-left:10px;padding-left:17px}
.bm{height:42px;padding-left:20px}b{font-weight:400;color:#202124}</style>
<div class="row nav"><ui-icon name="back"></ui-icon><ui-icon name="fwd" style="margin-left:24px;color:#9d8d74"></ui-icon><ui-icon name="reload" size="30" style="margin-left:22px"></ui-icon>
<div class="omni"><ui-icon name="lock" size="14" h="18"></ui-icon><fit-text w="322" s="20" style="margin:2px 0 0 17px"><b>github.com</b>/jiya-sav/ourshiny/pulls</fit-text><ui-icon name="share" style="margin-left:959px"></ui-icon><ui-icon name="bstar" size="25" style="margin-left:23px"></ui-icon></div>
<ui-icon name="puzzle" style="margin-left:21px"></ui-icon><ui-icon name="leaf" style="margin-left:24px"></ui-icon><ui-icon name="panel" style="margin-left:24px"></ui-icon><div class="av" style="margin-left:20px">J</div>
<div class="up"><fit-text w="59" s="17">Update</fit-text><ui-icon name="dots" style="margin-left:12px"></ui-icon></div></div>
<div class="row bm"><ui-icon name="lesson"></ui-icon><fit-text w="167" s="17" style="margin-left:13px">Lesson Plan | I &lt;3 p...</fit-text></div>`);

define('gh-button', `<style>:host{display:flex;align-items:stretch;height:41px;border:1.500px solid #d4d7da;border-radius:9px;box-shadow:0 1.500px 1px rgba(31,35,40,.05);font-size:17px;font-weight:600;flex:none;box-sizing:border-box}
::slotted(ui-icon){color:#656d76}::slotted(*){align-self:center}</style><slot></slot>`);
define('gh-count', `<style>:host{display:grid;place-items:center;width:30px;height:29px;border-radius:15px;background:#e5e7ea;font-size:17px;font-weight:600;flex:none}</style><slot></slot>`);
define('gh-nav-item', `<style>:host{display:flex;align-items:center;height:72px;padding:0 12px;gap:13px;font-size:20px;margin-right:12px;position:relative;box-sizing:border-box}::slotted(ui-icon){color:#656d76}::slotted(fit-text){padding-top:3px}
:host([current]){font-weight:600}:host([current])::after{content:"";position:absolute;left:0;right:0;bottom:0;height:3px;border-radius:2px 2px 0 0;background:#f08c70}</style><slot></slot>`);
define('repo-header', `<style>:host{display:flex;flex-direction:column;height:191px;background:#f6f8fa;box-shadow:inset 0 -2px #d8dee4;padding:22px 48px 0;box-sizing:border-box}
.title{height:41px}.from{height:24px;margin-top:6px;color:#656d76;font-size:17px}.nav{display:flex;margin-top:26px}
.pub{border:1.500px solid #d0d7de;border-radius:15px;height:30px;width:73px;display:grid;place-items:center;margin-left:11px;color:#656d76;font-weight:500}
.sep{width:1.500px;background:#d4d7da;height:38px}gh-button fit-text{padding-top:1px}</style>
<div class="row title"><ui-icon name="repo" style="color:#656d76;margin-top:-3px"></ui-icon><a><fit-text w="101" s="28" style="margin-left:11px">jiya-sav</fit-text></a><fit-text w="13" s="28" style="margin-left:5px;color:#656d76">/</fit-text><a><fit-text w="118" s="28" style="margin-left:5px;font-weight:600">ourshiny</fit-text></a><span class="pub"><fit-text w="51" s="17">Public</fit-text></span>
<gh-button style="width:100px;margin-left:702px"><ui-icon name="pin" style="margin-left:17px"></ui-icon><fit-text w="26" style="margin-left:14px">Pin</fit-text></gh-button>
<gh-button style="width:199px;margin-left:12px"><ui-icon name="eye" style="margin-left:18px"></ui-icon><fit-text w="72" style="margin-left:5px">Unwatch</fit-text><gh-count style="margin-left:7px">1</gh-count><ui-icon name="caret" size="12" h="7" style="margin:4px 0 0 11px;color:#4a4f55"></ui-icon></gh-button>
<gh-button style="width:197px;margin-left:12px;color:#8c959f"><ui-icon name="fork" style="margin-left:18px;color:#8c959f"></ui-icon><fit-text w="36" style="margin-left:13px">Fork</fit-text><gh-count style="margin-left:7px">0</gh-count><span class="sep" style="margin-left:18px"></span><ui-icon name="caret" size="11" h="7" style="margin:2px 0 0 18px"></ui-icon></gh-button>
<gh-button style="width:198px;margin-left:18px"><ui-icon name="star" style="margin-left:18px"></ui-icon><fit-text w="32" style="margin-left:18px">Star</fit-text><gh-count style="margin-left:7px">0</gh-count><span class="sep" style="margin-left:17px"></span><ui-icon name="caret" size="11" h="7" style="margin:2px 0 0 19px"></ui-icon></gh-button></div>
<div class="row from"><fit-text w="124">generated from</fit-text><a><fit-text w="195" style="margin-left:5px">nighthawkcoders/APCSP</fit-text></a></div>
<div class="nav"><gh-nav-item><ui-icon name="code"></ui-icon><fit-text w="48">Code</fit-text></gh-nav-item><gh-nav-item><ui-icon name="issue"></ui-icon><fit-text w="56">Issues</fit-text></gh-nav-item><gh-nav-item current><ui-icon name="pr"></ui-icon><fit-text w="121">Pull requests</fit-text></gh-nav-item><gh-nav-item><ui-icon name="play"></ui-icon><fit-text w="70">Actions</fit-text></gh-nav-item><gh-nav-item><ui-icon name="table"></ui-icon><fit-text w="74">Projects</fit-text></gh-nav-item><gh-nav-item><ui-icon name="book"></ui-icon><fit-text w="42">Wiki</fit-text></gh-nav-item><gh-nav-item><ui-icon name="shield"></ui-icon><fit-text w="75">Security</fit-text></gh-nav-item><gh-nav-item><ui-icon name="graph"></ui-icon><fit-text w="73">Insights</fit-text></gh-nav-item><gh-nav-item><ui-icon name="gear"></ui-icon><fit-text w="76">Settings</fit-text></gh-nav-item></div>`);

define('primary-button', `<style>:host{display:grid;place-items:center;height:47px;border:1.500px solid #3c7a3c;border-radius:9px;background:#448844;color:#fff;font-size:20px;font-weight:600;box-shadow:0 1.500px 1px rgba(31,35,40,.1);flex:none;padding-top:3px;box-sizing:border-box}</style><slot></slot>`);
define('promo-card', `<style>:host{display:grid;grid-template-columns:100px 1fr 100px;height:154px;border:1.500px solid #d8dee4;border-radius:9px;padding:36px 36px 0;font-size:20px;box-sizing:border-box}
.c{display:flex;flex-direction:column;align-items:center}.l{display:flex;align-items:center;height:40px}.l+.l{margin-top:-1px}.pill{display:grid;place-items:center;width:149px;height:29px;border-radius:15px;background:#7057ff;color:#fff;font-weight:600;margin-left:5px;margin-top:1px}
.d{text-align:right;padding-top:3px}</style><span></span><div class="c"><div class="l"><fit-text w="554" s="22.800" style="font-weight:600">Label issues and pull requests for new contributors</fit-text></div>
<div class="l"><fit-text w="499">Now, GitHub will help potential first-time contributors</fit-text><a><fit-text w="138" style="margin-left:5px">discover issues</fit-text></a><fit-text w="113" style="margin-left:5px">labeled with</fit-text><span class="pill"><fit-text w="127" s="17">good first issue</fit-text></span></div></div><div class="d"><a><fit-text w="70">Dismiss</fit-text></a></div>`);
define('push-notice', `<style>:host{display:flex;align-items:center;height:94px;margin-top:36px;border:1.500px solid #e8dc8d;border-radius:9px;background:#fef6c3;padding:0 18px 0 24px;font-size:20px;box-sizing:border-box}fit-text{padding-top:1px}primary-button fit-text{padding:0}</style>
<ui-icon name="branch" style="color:#9a6700;margin-top:1px"></ui-icon><fit-text w="265" style="margin-left:12px;font-weight:600">fastpages-automated-setup</fit-text><fit-text w="299" style="margin-left:5px">had recent pushes 1 minute ago</fit-text><primary-button style="width:276px;margin:-2px 0 0 auto"><fit-text w="228">Compare &amp; pull request</fit-text></primary-button>`);
define('filter-bar', `<style>:host{display:flex;height:48px;margin-top:24px;font-size:20px}.f{display:flex;align-items:center;width:130px;height:47px;border:1.500px solid #d0d7de;border-radius:9px 0 0 9px;background:#f6f8fa;padding-left:24px;font-weight:600;box-shadow:0 1.500px 1px rgba(31,35,40,.04)}
.i{display:flex;align-items:center;width:1017px;height:47px;border:1.500px solid #d0d7de;border-left:0;border-radius:0 9px 9px 0;background:#f6f8fa;box-shadow:inset 0 1.500px 0 rgba(208,215,222,.25);padding-left:11px;color:#656d76}
.g{display:flex;width:392px;border:1.500px solid #d0d7de;border-radius:9px;margin-left:24px;font-weight:500}.g div{display:flex;align-items:center}.g div+div{border-left:1.500px solid #d0d7de}gh-count{height:26px;background:#eff1f3;font-weight:500;font-size:16.500px}.f fit-text,.i fit-text,.g fit-text{padding-top:2px}</style>
<div class="f"><fit-text w="58">Filters</fit-text><ui-icon name="caret" size="12" h="7" style="margin:4px 0 0 11px;color:#4a4f55"></ui-icon></div><div class="i"><ui-icon name="search"></ui-icon><fit-text w="110" style="margin-left:13px">is:pr is:open</fit-text></div>
<div class="g"><div style="width:173px;padding-left:24px"><ui-icon name="tag"></ui-icon><fit-text w="60" style="margin-left:6px">Labels</fit-text><gh-count style="margin-left:6px">9</gh-count></div><div style="padding-left:23px"><ui-icon name="milestone"></ui-icon><fit-text w="103" style="margin-left:7px">Milestones</fit-text><gh-count style="margin-left:6px">0</gh-count></div></div>
<primary-button style="width:212px;margin:1px 0 0 24px"><fit-text w="163">New pull request</fit-text></primary-button>`);
define('blank-slate', `<style>:host{display:flex;flex-direction:column;align-items:center;margin-top:24px;height:400px;border:1.500px solid #d0d7de;border-radius:9px;padding-top:120px;color:#656d76;font-size:22.800px;box-sizing:border-box}
h2{margin:40px 0 0;line-height:54px;color:#1f2328;font-weight:550;font-size:34px}.l{display:flex;align-items:center;height:36px}.l:first-of-type{margin-top:24px}</style>
<ui-icon name="prbig" size="36"></ui-icon><h2><fit-text w="427">Welcome to pull requests!</fit-text></h2>
<div class="l"><fit-text w="1026">Pull requests help you collaborate on code with other people. As pull requests are created, they’ll</fit-text></div><div class="l"><fit-text w="760">appear here in a searchable and filterable list. To get started, you should</fit-text><a><fit-text w="216" style="margin-left:6px">create a pull request</fit-text></a><fit-text w="6">.</fit-text></div>`);
define('scroll-bar', `<style>:host{display:flex;flex-direction:column;align-items:center;justify-content:space-between;width:25px;background:#f1f1f1;padding:11px 0 9px;color:#505050;box-sizing:border-box}.t{width:21px;height:556px;background:#c1c1c1;margin:132px 0 auto}.u{transform:rotate(180deg)}</style><ui-icon class="u" name="caret" size="11" h="6"></ui-icon><div class="t"></div><ui-icon name="caret" size="11" h="6"></ui-icon>`);
define('page-view', `<style>:host{display:flex;height:973px;overflow:hidden;background:#fff}.p{width:1895px}main{padding:36px 48px 0}</style><div class="p"><repo-header></repo-header><main><promo-card></promo-card><push-notice></push-notice><filter-bar></filter-bar><blank-slate></blank-slate></main></div><scroll-bar></scroll-bar>`);

define('task-app', `<style>:host{display:grid;place-items:center;width:66px;height:69px;position:relative;flex:none}
:host([on])::after{content:"";position:absolute;bottom:7px;left:28.500px;width:9px;height:5px;border-radius:3px;background:#858585}
:host([active])::before{content:"";position:absolute;left:4px;top:6px;width:51px;height:57px;border-radius:6px;background:#fafafa;border:1.500px solid #dfdfdf;box-shadow:4px 0 0 -1px #ececec,5px 0 0 -1px #dcdcdc;box-sizing:border-box}
:host([active])::after{content:"";position:absolute;bottom:7px;left:21px;width:24px;height:5px;border-radius:3px;background:#0b78d4}
ui-icon{position:relative}.b{position:absolute;width:24px;height:24px;border-radius:50%;left:35px;top:9px;color:#fff;display:grid;place-items:center;font-size:16px;z-index:1}</style><slot></slot>`, function (r) {
  const b = this.getAttribute('badge'); const icon = document.createElement('ui-icon');
  icon.setAttribute('name', this.getAttribute('icon')); icon.setAttribute('size', 36); r.appendChild(icon);
  if (b) { const s = document.createElement('span'); s.className = 'b'; s.textContent = b; s.style.background = this.getAttribute('tone'); r.appendChild(s); }
});
define('task-bar', `<style>:host{display:flex;align-items:flex-start;height:72px;background:#eee;border-top:2px solid #bdbdbd;box-sizing:border-box}.in{display:flex;align-items:center;height:69px;width:1920px}
.s{display:flex;align-items:center;width:330px;height:48px;border-radius:24px;background:#fafafa;border:2px solid #dedede;border-bottom-color:#c6c6c6;margin-left:20px;padding-left:15px;color:#5a5a5a}
.st{display:flex;flex-direction:column;margin-top:-2px}.st fit-text{line-height:24px}.c{align-items:flex-end;color:#1b1b1b}.n{width:24px;height:24px;border-radius:50%;background:#0067c0;color:#fff;display:grid;place-items:center;font-size:15.500px;margin:-1px 0 0 12px}.tr{display:flex;margin-top:-2px}</style>
<div class="in"><ui-icon name="weather" size="37" h="32" style="margin-left:28px"></ui-icon><div class="st" style="margin-left:11px;width:115px"><fit-text w="35" s="17">52°F</fit-text><fit-text w="114" s="17" style="color:#5a5a5a">Mostly cloudy</fit-text></div>
<ui-icon name="windows" size="36" style="margin-left:170px"></ui-icon><div class="s"><ui-icon name="wsearch" size="24"></ui-icon><fit-text w="63" s="20" style="margin-left:14px">Search</fit-text></div>
<div style="display:flex;margin-left:3px"><task-app icon="taskview"></task-app><task-app icon="chat" badge="1" tone="#0078d4"></task-app><task-app icon="explorer"></task-app><task-app icon="edge" on></task-app><task-app icon="chrome"></task-app><task-app icon="store"></task-app><task-app icon="dell"></task-app><task-app icon="powershell" on></task-app><task-app icon="docker" on></task-app><task-app icon="chrome" active badge="J" tone="#ee5121"></task-app><task-app icon="vscode" on></task-app></div>
<div class="tr"><ui-icon name="up" style="margin-left:31px"></ui-icon><ui-icon name="cloud" style="margin-left:24px"></ui-icon><ui-icon name="sync" style="margin-left:24px"></ui-icon><ui-icon name="wifi" style="margin-left:24px"></ui-icon><ui-icon name="mute" style="margin-left:11px"></ui-icon><ui-icon name="battery" style="margin-left:13px"></ui-icon></div>
<div class="st c" style="margin-left:25px"><fit-text w="76" s="17">11:33 AM</fit-text><fit-text w="82" s="17">3/30/2023</fit-text></div><span class="n">2</span></div>`);
define('desktop-screen', `<style>:host{display:flex;flex-direction:column;width:1920px;height:1200px}</style><browser-tabs></browser-tabs><browser-toolbar></browser-toolbar><page-view></page-view><task-bar></task-bar>`);
</script>
</body>
</html>
